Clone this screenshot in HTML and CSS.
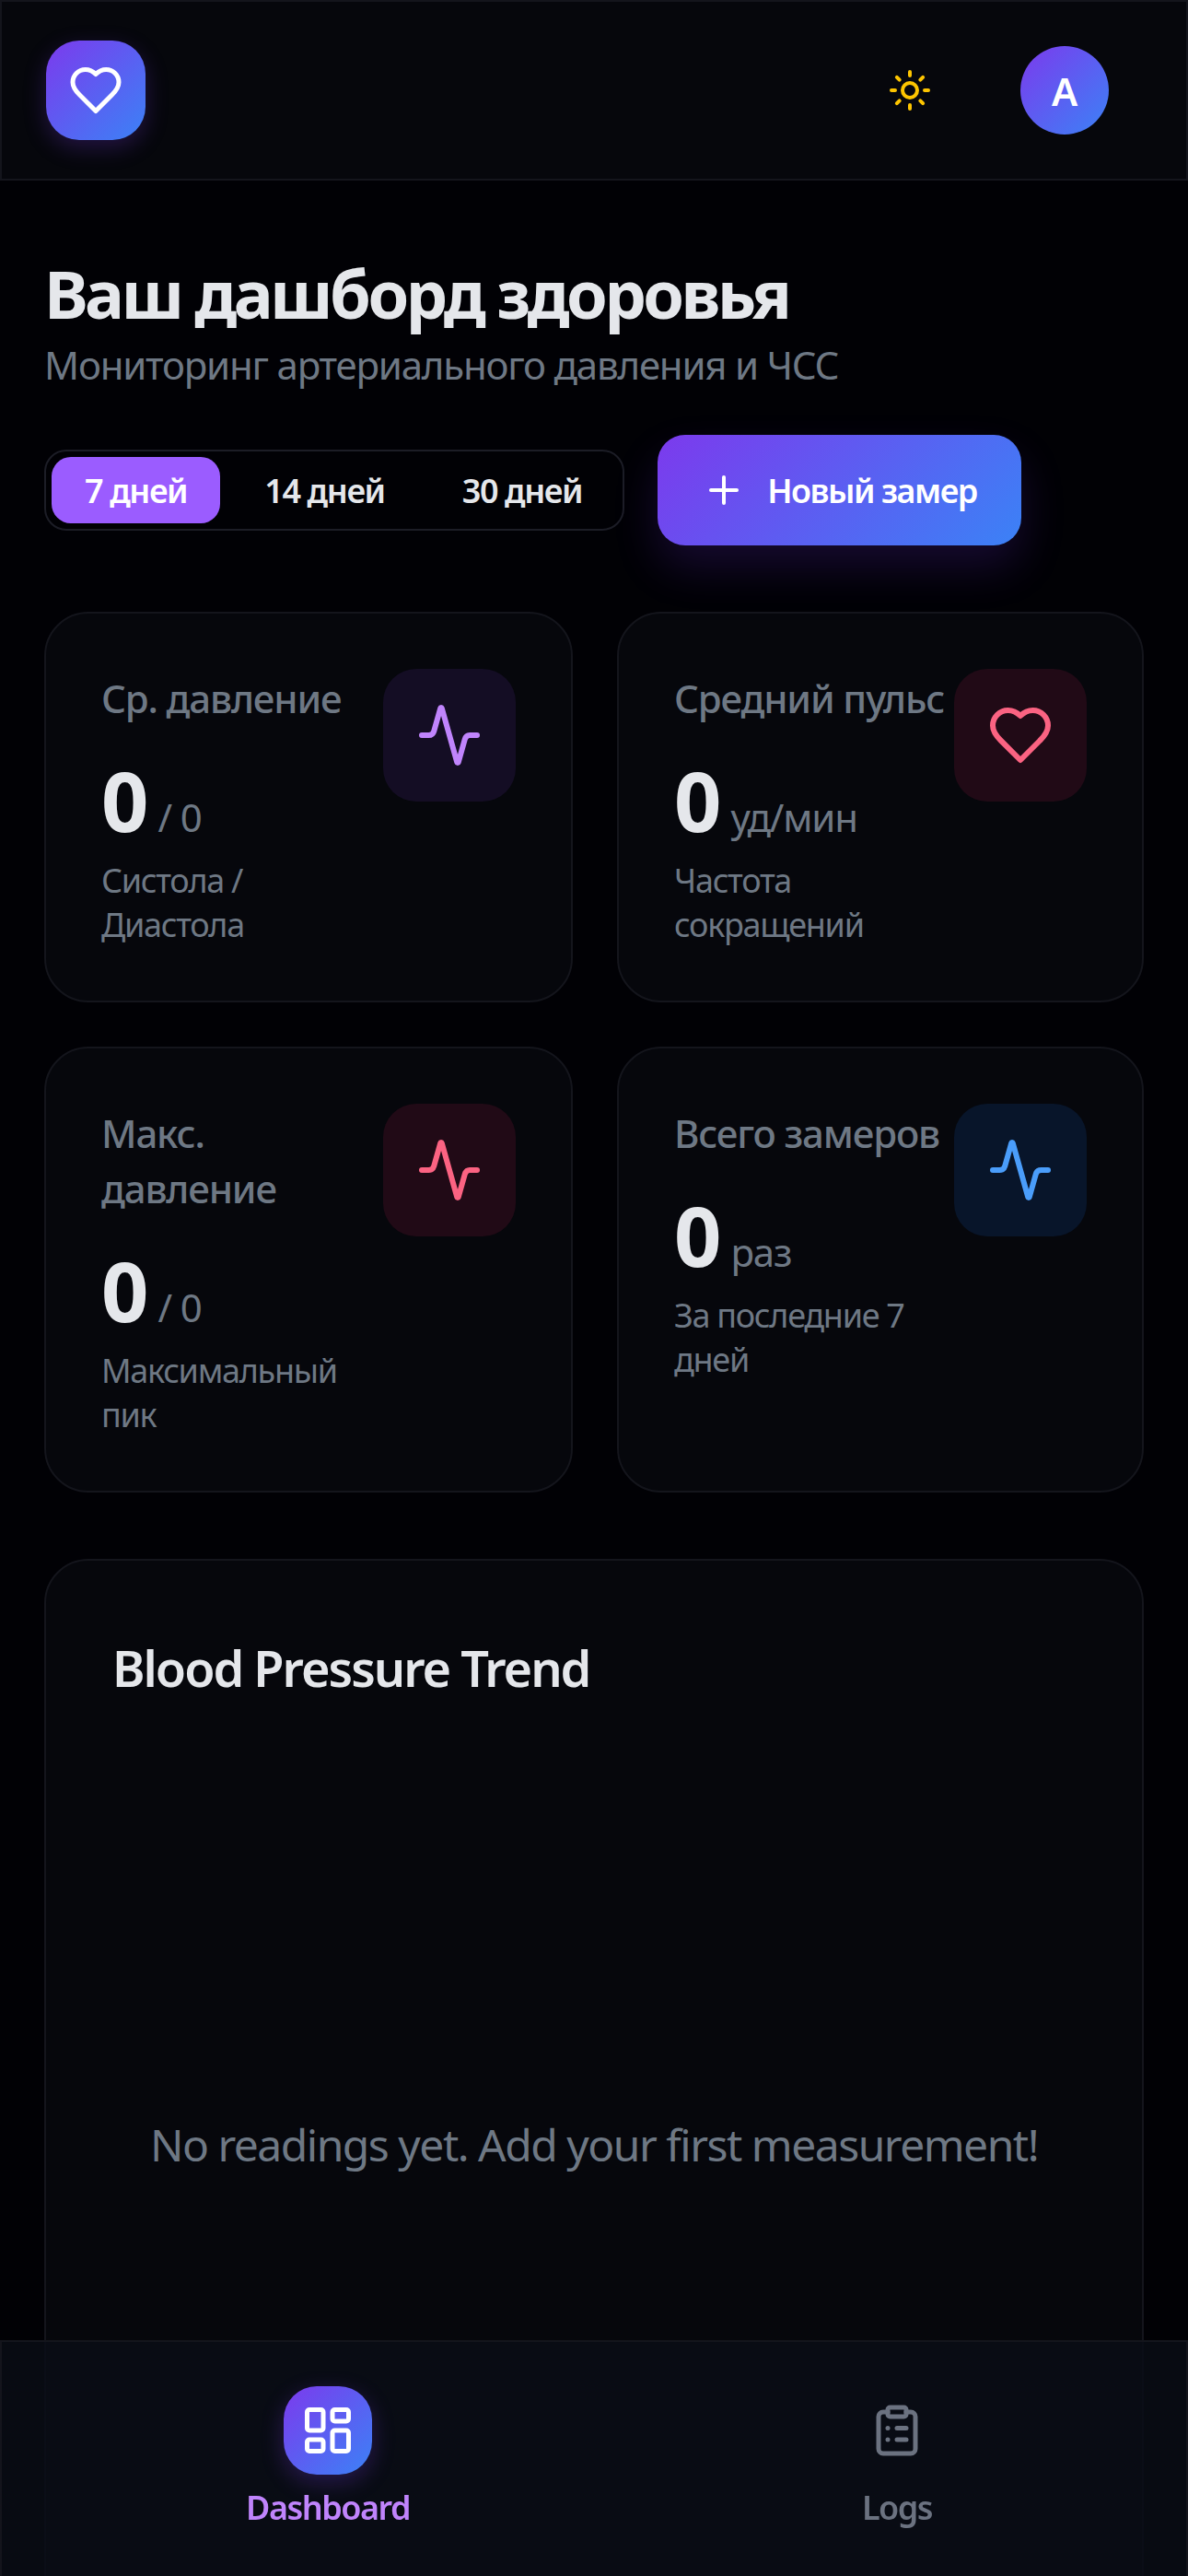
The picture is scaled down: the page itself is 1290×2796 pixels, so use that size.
FILE: index.html
```html
<!DOCTYPE html>
<html lang="ru">
<head>
<meta charset="utf-8">
<title>Дашборд здоровья</title>
<link rel="stylesheet" href="styles.css">
</head>
<body>
<div class="app">
  <header class="topbar">
    <div class="logo">
      <svg class="ic ic-60" viewBox="0 0 24 24"><path d="M19 14c1.49-1.46 3-3.21 3-5.5A5.5 5.5 0 0 0 16.5 3c-1.76 0-3 .5-4.5 2-1.5-1.5-2.74-2-4.5-2A5.5 5.5 0 0 0 2 8.5c0 2.3 1.5 4.05 3 5.5l7 7Z"/></svg>
    </div>
    <div class="actions">
      <svg class="ic ic-48 sun" viewBox="0 0 24 24"><circle cx="12" cy="12" r="4"/><path d="M12 2v2"/><path d="M12 20v2"/><path d="m4.93 4.93 1.41 1.41"/><path d="m17.66 17.66 1.41 1.41"/><path d="M2 12h2"/><path d="M20 12h2"/><path d="m6.34 17.66-1.41 1.41"/><path d="m19.07 4.93-1.41 1.41"/></svg>
      <div class="avatar">A</div>
    </div>
  </header>
  <main class="main">
    <h1 class="title">Ваш дашборд здоровья</h1>
    <p class="subtitle">Мониторинг артериального давления и ЧСС</p>
    <div class="controls">
      <div class="tabs">
        <span class="tab tab-active">7 дней</span>
        <span class="tab">14 дней</span>
        <span class="tab">30 дней</span>
      </div>
      <div class="add-btn">
        <svg class="ic ic-48" viewBox="0 0 24 24"><path d="M5 12h14"/><path d="M12 5v14"/></svg>
        <span>Новый замер</span>
      </div>
    </div>
    <section class="stats">
      <article class="card">
        <div class="card-body">
          <div class="label">Ср. давление</div>
          <div class="value">0<span class="unit">/ 0</span></div>
          <div class="note">Систола / Диастола</div>
        </div>
        <div class="badge badge-purple">
          <svg class="ic ic-72" viewBox="0 0 24 24"><path d="M22 12h-2.48a2 2 0 0 0-1.93 1.46l-2.35 8.36a.25.25 0 0 1-.48 0L9.24 2.18a.25.25 0 0 0-.48 0l-2.35 8.36A2 2 0 0 1 4.49 12H2"/></svg>
        </div>
      </article>
      <article class="card">
        <div class="card-body">
          <div class="label">Средний пульс</div>
          <div class="value">0<span class="unit">уд/мин</span></div>
          <div class="note">Частота сокращений</div>
        </div>
        <div class="badge badge-pink">
          <svg class="ic ic-72" viewBox="0 0 24 24"><path d="M19 14c1.49-1.46 3-3.21 3-5.5A5.5 5.5 0 0 0 16.5 3c-1.76 0-3 .5-4.5 2-1.5-1.5-2.74-2-4.5-2A5.5 5.5 0 0 0 2 8.5c0 2.3 1.5 4.05 3 5.5l7 7Z"/></svg>
        </div>
      </article>
      <article class="card">
        <div class="card-body">
          <div class="label">Макс. давление</div>
          <div class="value">0<span class="unit">/ 0</span></div>
          <div class="note">Максимальный пик</div>
        </div>
        <div class="badge badge-pink">
          <svg class="ic ic-72" viewBox="0 0 24 24"><path d="M22 12h-2.48a2 2 0 0 0-1.93 1.46l-2.35 8.36a.25.25 0 0 1-.48 0L9.24 2.18a.25.25 0 0 0-.48 0l-2.35 8.36A2 2 0 0 1 4.49 12H2"/></svg>
        </div>
      </article>
      <article class="card">
        <div class="card-body">
          <div class="label">Всего замеров</div>
          <div class="value">0<span class="unit">раз</span></div>
          <div class="note">За последние 7 дней</div>
        </div>
        <div class="badge badge-blue">
          <svg class="ic ic-72" viewBox="0 0 24 24"><path d="M22 12h-2.48a2 2 0 0 0-1.93 1.46l-2.35 8.36a.25.25 0 0 1-.48 0L9.24 2.18a.25.25 0 0 0-.48 0l-2.35 8.36A2 2 0 0 1 4.49 12H2"/></svg>
        </div>
      </article>
    </section>
    <section class="chart">
      <h2 class="chart-title">Blood Pressure Trend</h2>
      <div class="chart-empty">No readings yet. Add your first measurement!</div>
    </section>
  </main>
  <nav class="bottom">
    <div class="nav-item nav-active">
      <div class="nav-icon">
        <svg class="ic ic-60" viewBox="0 0 24 24"><rect width="7" height="9" x="3" y="3" rx="1"/><rect width="7" height="5" x="14" y="3" rx="1"/><rect width="7" height="9" x="14" y="12" rx="1"/><rect width="7" height="5" x="3" y="16" rx="1"/></svg>
      </div>
      <span class="nav-label">Dashboard</span>
    </div>
    <div class="nav-item">
      <div class="nav-icon">
        <svg class="ic ic-60" viewBox="0 0 24 24"><rect width="8" height="4" x="8" y="2" rx="1" ry="1"/><path d="M16 4h2a2 2 0 0 1 2 2v14a2 2 0 0 1-2 2H6a2 2 0 0 1-2-2V6a2 2 0 0 1 2-2h2"/><path d="M12 11h4"/><path d="M12 16h4"/><path d="M8 11h.01"/><path d="M8 16h.01"/></svg>
      </div>
      <span class="nav-label">Logs</span>
    </div>
  </nav>
</div>
</body>
</html>
```
FILE: styles.css
```css
* { box-sizing: border-box; margin: 0; padding: 0; }
html, body { height: 100%; }
body {
  background: #010105;
  color: #e5e7eb;
  font-family: "Noto Sans", "Open Sans", sans-serif;
  overflow: hidden;
}
.app { height: 2796px; overflow: hidden; }
.ic { fill: none; stroke: currentColor; stroke-width: 2; stroke-linecap: round; stroke-linejoin: round; flex: none; display: block; }
.ic-48 { width: 48px; height: 48px; }
.ic-60 { width: 60px; height: 60px; }
.ic-72 { width: 72px; height: 72px; }

.topbar {
  height: 196px;
  display: flex;
  align-items: center;
  justify-content: space-between;
  padding: 0 84px 0 48px;
  background: #06070c;
  border: 2px solid #14151c;
}
.logo {
  width: 108px; height: 108px;
  border-radius: 36px;
  display: flex; align-items: center; justify-content: center;
  color: #fff;
  background: linear-gradient(135deg, #7c3aed, #3b82f6);
  box-shadow: 0 8px 24px rgba(124, 58, 237, .25);
}
.actions { display: flex; align-items: center; gap: 96px; }
.sun { color: #fdc500; }
.avatar {
  width: 96px; height: 96px;
  border-radius: 50%;
  display: flex; align-items: center; justify-content: center;
  color: #fff;
  font-size: 42px; font-weight: 600;
  background: linear-gradient(135deg, #7c3aed, #3b82f6);
}

.main { padding: 80px 48px 0; }
.title { font-size: 72px; line-height: 84px; font-weight: 700; color: #e5e7eb; letter-spacing: -3.6px; }
.subtitle { margin-top: 8px; font-size: 42px; line-height: 56px; color: #6e7884; letter-spacing: -1.2px; }

.controls { margin-top: 48px; display: flex; align-items: center; gap: 36px; }
.tabs {
  height: 88px;
  padding: 6px 8px 6px 6px;
  display: flex; align-items: center; gap: 12px;
  border: 2px solid #1c1d26;
  border-radius: 24px;
}
.tab {
  height: 72px;
  padding: 0 36px;
  display: flex; align-items: center;
  border-radius: 21px;
  color: #e5e7eb;
  font-size: 36px; font-weight: 600;
  letter-spacing: -1.4px;
}
.tab-active { color: #fff; background: #9b5cff; }
.add-btn {
  height: 120px;
  padding: 0 48px;
  display: flex; align-items: center; gap: 23px;
  border-radius: 30px;
  color: #fff;
  font-size: 36px; font-weight: 600;
  letter-spacing: -1.5px;
  background: linear-gradient(135deg, #7c3aed, #3b82f6);
  box-shadow: 0 24px 48px rgba(124, 58, 237, .18);
}

.stats { margin-top: 72px; display: grid; grid-template-columns: 574px 572px; gap: 48px; }
.card {
  display: flex; align-items: flex-start; justify-content: space-between;
  padding: 60px 60px 58px;
  background: #06070c;
  border: 2px solid #14151c;
  border-radius: 48px;
}
.card-body { min-width: 0; flex: 1; }
.label { margin-top: 2px; font-size: 42px; line-height: 60px; font-weight: 500; color: #6e7884; letter-spacing: -1.15px; }
.value { margin-top: 26px; font-size: 90px; line-height: 108px; font-weight: 700; color: #e5e7eb; }
.unit { margin-left: 10px; font-size: 42px; line-height: 1; font-weight: 400; color: #6e7884; letter-spacing: -1.2px; }
.note { margin-top: 10px; font-size: 36px; line-height: 48px; color: #6e7884; letter-spacing: -1.3px; }
.badge {
  width: 144px; height: 144px;
  border-radius: 36px;
  display: flex; align-items: center; justify-content: center;
  flex: none;
}
.badge-purple { background: #140d24; color: #c084fc; }
.badge-pink { background: #210a16; color: #fb6382; }
.badge-blue { background: #08152a; color: #4a9dfa; }

.chart {
  margin-top: 72px;
  padding: 80px 72px;
  background: #06070c;
  border: 2px solid #14151c;
  border-radius: 48px;
}
.chart-title { font-size: 54px; line-height: 72px; font-weight: 600; color: #e5e7eb; letter-spacing: -2px; }
.chart-empty {
  height: 962px;
  display: flex; align-items: center; justify-content: center;
  font-size: 48px; color: #6e7884;
  letter-spacing: -1.5px;
}

.bottom {
  position: fixed;
  left: 0; right: 0; bottom: 0;
  height: 256px;
  display: flex; justify-content: space-between;
  padding: 48px 194px 0 234px;
  background: rgba(10, 13, 22, .82);
  border: 2px solid #14151c;
  border-bottom: 0;
}
.nav-item { width: 240px; display: flex; flex-direction: column; align-items: center; gap: 12px; color: #6b7280; }
.nav-icon { width: 96px; height: 96px; border-radius: 36px; display: flex; align-items: center; justify-content: center; }
.nav-label { font-size: 36px; line-height: 48px; font-weight: 600; letter-spacing: -1.5px; }
.nav-active { color: #c084fc; }
.nav-active .nav-icon {
  color: #fff;
  background: linear-gradient(135deg, #7c3aed, #3b82f6);
  box-shadow: 0 8px 24px rgba(124, 58, 237, .28);
}
```
